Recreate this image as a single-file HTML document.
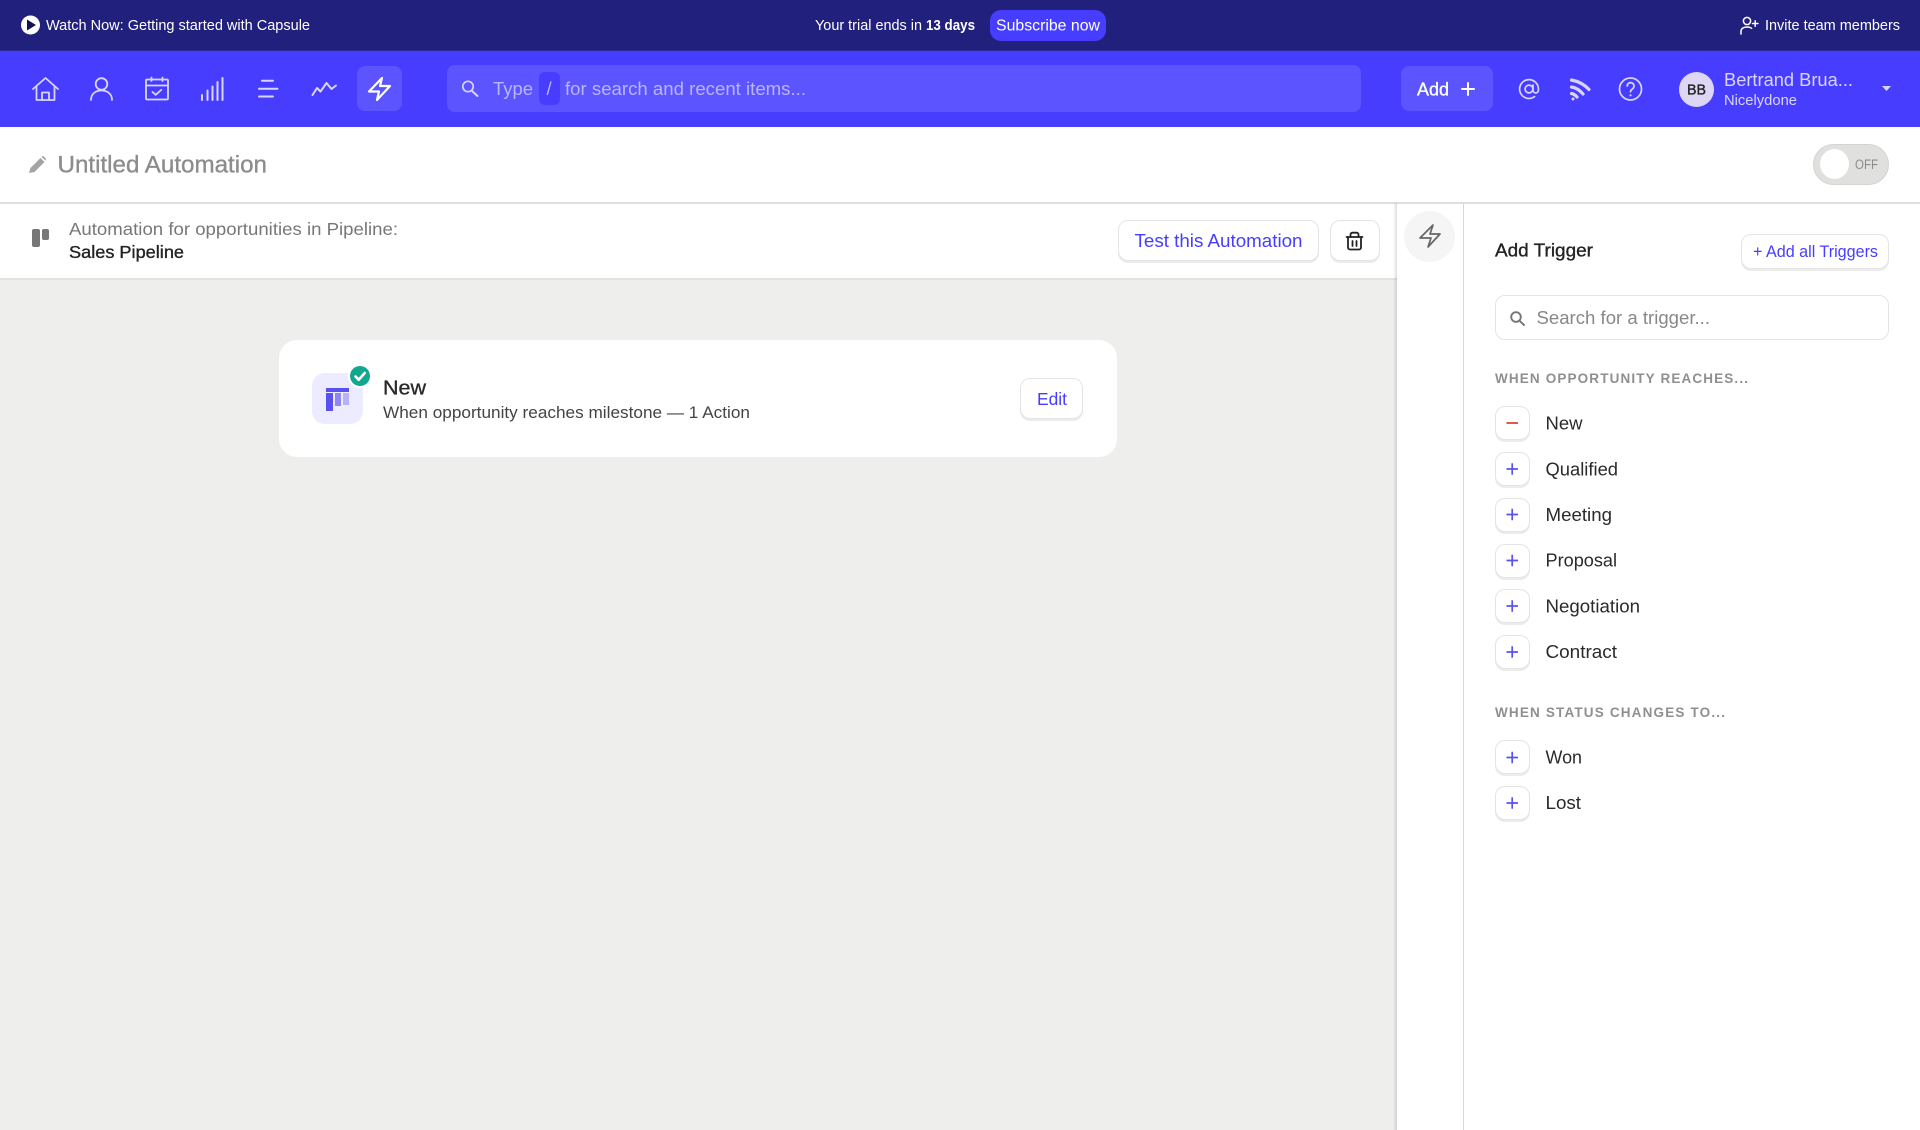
<!DOCTYPE html>
<html lang="en">
<head>
<meta charset="utf-8">
<title>Untitled Automation</title>
<style>
html,body{margin:0;padding:0;width:1920px;height:1130px;overflow:hidden;background:#fff;font-family:"Liberation Sans",sans-serif}
.a{position:absolute;box-sizing:border-box}
svg{position:absolute;left:0;top:0}
text{font-family:"Liberation Sans",sans-serif;white-space:pre}
.m{stroke:currentColor;stroke-width:.35px}
.btn{background:#fff;border:1.5px solid #e4e4e4;border-radius:10px;box-shadow:0 2px 0 #ececec}
</style>
</head>
<body>
<div class="a" style="left:0;top:0;width:1920px;height:51px;background:#21207d;border-bottom:1px solid #2b2a96"></div>
<div class="a" style="left:0;top:51px;width:1920px;height:76px;background:#473dff"></div>
<div class="a" style="left:990px;top:10px;width:116px;height:31px;background:#473dff;border-radius:11px"></div>
<div class="a" style="left:357px;top:66px;width:45px;height:45px;background:#5b54ff;border-radius:8px"></div>
<div class="a" style="left:447px;top:65px;width:914px;height:47px;background:#5b54ff;border-radius:8px"></div>
<div class="a" style="left:539px;top:72px;width:21px;height:33px;background:#473dff;border-radius:6px"></div>
<div class="a" style="left:1401px;top:66px;width:92px;height:45px;background:#5b54ff;border-radius:8px"></div>
<div class="a" style="left:1679px;top:72px;width:35px;height:35px;background:#ded6f5;border-radius:50%"></div>

<div class="a" style="left:0;top:202px;width:1920px;height:1.5px;background:#dfdfdf"></div>
<div class="a" style="left:0;top:278px;width:1396.5px;height:852px;background:#eeeeec"></div>
<div class="a" style="left:0;top:278px;width:1396.5px;height:1.5px;background:#e2e2e0"></div>
<div class="a" style="left:1393px;top:203px;width:3.5px;height:927px;background:linear-gradient(90deg,rgba(0,0,0,0),rgba(0,0,0,.13))"></div>
<div class="a" style="left:1463px;top:203px;width:1px;height:927px;background:#d8d8d8"></div>

<div class="a" style="left:1813px;top:144px;width:76px;height:41px;background:#e0e0de;border:1.5px solid #d4d4d2;border-radius:21px"></div>
<div class="a" style="left:1820px;top:149px;width:29px;height:30px;background:#fff;border-radius:50%"></div>

<div class="a btn" style="left:1118px;top:220px;width:201px;height:41px"></div>
<div class="a btn" style="left:1330px;top:220px;width:50px;height:41px"></div>
<div class="a" style="left:1404px;top:211px;width:51px;height:51px;background:#f5f5f5;border-radius:50%"></div>

<div class="a" style="left:279px;top:340px;width:838px;height:117px;background:#fff;border-radius:18px"></div>
<div class="a" style="left:312px;top:373px;width:51px;height:51px;background:#ecebff;border-radius:13px"></div>
<div class="a" style="left:326px;top:388px;width:23px;height:4px;background:#5a52f0"></div>
<div class="a" style="left:326px;top:393px;width:7px;height:18px;background:#5a52f0"></div>
<div class="a" style="left:335px;top:393px;width:6px;height:13px;background:#8d87f3"></div>
<div class="a" style="left:343px;top:393px;width:6px;height:12px;background:#b7b3f8"></div>
<div class="a" style="left:348px;top:364px;width:24px;height:24px;background:#fff;border-radius:50%"></div>
<div class="a" style="left:350px;top:366px;width:20px;height:20px;background:#12a88f;border-radius:50%"></div>
<div class="a btn" style="left:1020px;top:378px;width:63px;height:41px"></div>

<div class="a btn" style="left:1741px;top:234px;width:148px;height:35px"></div>
<div class="a" style="left:1495px;top:295px;width:394px;height:45px;background:#fff;border:1.5px solid #e4e4e4;border-radius:10px"></div>

<div class="a btn" style="left:1495px;top:406px;width:35px;height:34px"></div>
<div class="a btn" style="left:1495px;top:452px;width:35px;height:34px"></div>
<div class="a btn" style="left:1495px;top:497.5px;width:35px;height:34px"></div>
<div class="a btn" style="left:1495px;top:543.5px;width:35px;height:34px"></div>
<div class="a btn" style="left:1495px;top:589px;width:35px;height:34px"></div>
<div class="a btn" style="left:1495px;top:635px;width:35px;height:34px"></div>
<div class="a btn" style="left:1495px;top:740px;width:35px;height:34px"></div>
<div class="a btn" style="left:1495px;top:786px;width:35px;height:34px"></div>

<svg width="1920" height="1130" viewBox="0 0 1920 1130" xmlns="http://www.w3.org/2000/svg">
  <!-- top bar icons -->
  <circle cx="30.5" cy="25" r="9.5" fill="#fff"/>
  <path d="M27 19.5 L36 25 L27 30.5 Z" fill="#14134f"/>
  <g fill="none" stroke="#fff" stroke-width="1.5" stroke-linecap="round">
    <circle cx="1747" cy="21" r="3.6"/>
    <path d="M1741 34 v-2.5 c0-3 2.5-4.5 6-4.5 c2 0 3.5 .4 4.6 1.3"/>
    <path d="M1752.5 23.5 h5.5 M1755.2 20.8 v5.4"/>
  </g>

  <!-- nav icons -->
  <g fill="none" stroke="#d9d5ff" stroke-width="1.8" stroke-linecap="round" stroke-linejoin="round">
    <path d="M33 89 L45.5 78 L58 89"/>
    <path d="M36.5 86.5 V100 H54.5 V86.5"/>
    <path d="M42 100 V92.5 H49 V100"/>
    <circle cx="101.5" cy="84" r="5.8"/>
    <path d="M91 100 c0-6 4.5-9.5 10.5-9.5 s10.5 3.5 10.5 9.5"/>
    <rect x="146" y="79.5" width="22" height="20" rx="1"/>
    <path d="M146 85.5 H168 M151.5 77.5 V81 M162.5 77.5 V81"/>
    <path d="M152.5 92 l3.2 2.8 5.6-5"/>
    <path d="M202 95 V100 M207.5 90.5 V100 M212.5 86.5 V100 M217.5 82 V100 M222.5 78 V100" stroke-width="2"/>
    <path d="M262 80.7 H273 M259 88.7 H277.5 M259 96.5 H273" stroke-width="2"/>
    <path d="M312.5 95 L317 88 L320.5 91.5 L326.5 83 L331.5 89 L336 85.5" stroke-width="2"/>
    <circle cx="468" cy="86.5" r="5.2" stroke-width="1.7"/>
    <path d="M472 91 L477.5 96" stroke-width="2"/>
  </g>
  <path d="M382 78 L369 91.5 H379 L377 100 L390 86 H380 Z" fill="none" stroke="#fff" stroke-width="2.2" stroke-linejoin="round"/>
  <path d="M1462 89 H1474 M1468 83 V95" stroke="#fff" stroke-width="2" fill="none" stroke-linecap="round"/>
  <g fill="none" stroke="#d9d5ff" stroke-width="1.7" stroke-linecap="round">
    <circle cx="1529" cy="89" r="3.9"/>
    <path d="M1533 85 v5.2 a2.7 2.7 0 0 0 5.4 0 v-1.2 a9.4 9.4 0 1 0 -3.8 7.6"/>
    <circle cx="1630.5" cy="89" r="11"/>
    <path d="M1627.2 86 a3.4 3.4 0 1 1 5.4 2.8 c-1.3 .9-2.1 1.5-2.1 3"/>
  </g>
  <circle cx="1630.5" cy="95.3" r="1.1" fill="#d9d5ff"/>
  <g fill="none" stroke="#d9d5ff" stroke-width="3.2" stroke-linecap="round">
    <path d="M1571.5 80 Q1582 82 1589 89.5"/>
    <path d="M1571.5 87 Q1578 88 1583 94"/>
    <path d="M1571.5 93.5 Q1574.5 94 1577 97"/>
  </g>
  <circle cx="1573" cy="99" r="1.5" fill="#d9d5ff"/>
  <path d="M1882 86 H1891 L1886.5 91 Z" fill="#d9d5ff"/>

  <!-- header icons -->
  <path d="M29 173 L30.5 168 L40.5 158 L44.5 162 L34.5 172 Z M41.5 157 L43 155.8 L46 158.8 L45.5 160.5 Z" fill="#a3a3a3"/>
  <rect x="32" y="229" width="8" height="18" rx="2" fill="#777"/>
  <rect x="42" y="229" width="7" height="11" rx="2" fill="#777"/>

  <!-- trash -->
  <g fill="none" stroke="#222" stroke-width="1.8" stroke-linecap="round" stroke-linejoin="round">
    <path d="M1346.5 237 H1362.5"/>
    <path d="M1350.5 237 V234.5 a1.8 1.8 0 0 1 1.8 -1.8 h4.4 a1.8 1.8 0 0 1 1.8 1.8 V237"/>
    <path d="M1348 237 V247.5 a2 2 0 0 0 2 2 h9 a2 2 0 0 0 2 -2 V237"/>
    <path d="M1352.5 241 V246 M1356.5 241 V246"/>
  </g>
  <path d="M1433 225 L1420 238 H1431 L1428 247 L1440 234 H1430 Z" fill="none" stroke="#666" stroke-width="1.7" stroke-linejoin="round"/>

  <!-- badge check -->
  <path d="M355.5 376.5 L358.7 379.7 L364.7 373" fill="none" stroke="#fff" stroke-width="2.6" stroke-linecap="round" stroke-linejoin="round"/>

  <!-- trigger search icon -->
  <g fill="none" stroke="#777" stroke-width="1.9" stroke-linecap="round">
    <circle cx="1516" cy="317" r="4.8"/>
    <path d="M1519.8 321 L1524 325"/>
  </g>

  <!-- item icons -->
  <path d="M1506.5 423 H1518" stroke="#e8403a" stroke-width="1.8" fill="none"/>
  <g stroke="#5a52f0" stroke-width="1.7" fill="none">
    <path d="M1506.5 469 H1518 M1512.2 463.3 V474.7"/>
    <path d="M1506.5 514.5 H1518 M1512.2 508.8 V520.2"/>
    <path d="M1506.5 560.5 H1518 M1512.2 554.8 V566.2"/>
    <path d="M1506.5 606 H1518 M1512.2 600.3 V611.7"/>
    <path d="M1506.5 652 H1518 M1512.2 646.3 V657.7"/>
    <path d="M1506.5 757.5 H1518 M1512.2 751.8 V763.2"/>
    <path d="M1506.5 803 H1518 M1512.2 797.3 V808.7"/>
  </g>

  <!-- text -->
  <g fill="#fff" color="#fff" font-size="14.4">
    <text x="46" y="30" textLength="264" lengthAdjust="spacingAndGlyphs">Watch Now: Getting started with Capsule</text>
    <text x="815" y="30" textLength="107" lengthAdjust="spacingAndGlyphs">Your trial ends in</text>
    <text x="926" y="30" font-weight="700" textLength="49" lengthAdjust="spacingAndGlyphs">13 days</text>
    <text x="996" y="30.5" font-size="15.5" textLength="104" lengthAdjust="spacingAndGlyphs">Subscribe now</text>
    <text x="1765" y="30" textLength="135" lengthAdjust="spacingAndGlyphs">Invite team members</text>
  </g>
  <g fill="#b9b5ff" font-size="18.6">
    <text x="493" y="95" textLength="40" lengthAdjust="spacingAndGlyphs">Type</text>
    <text x="546.5" y="95">/</text>
    <text x="565" y="95" textLength="241" lengthAdjust="spacingAndGlyphs">for search and recent items...</text>
  </g>
  <text class="m" x="1417" y="95.5" font-size="18.6" fill="#fff" color="#fff" textLength="32" lengthAdjust="spacingAndGlyphs">Add</text>
  <text x="1724" y="86" font-size="18.6" fill="#d9d5ff" textLength="129" lengthAdjust="spacingAndGlyphs">Bertrand Brua...</text>
  <text x="1724" y="105" font-size="14.4" fill="#d9d5ff" textLength="73" lengthAdjust="spacingAndGlyphs">Nicelydone</text>
  <text class="m" x="1687" y="94.5" font-size="14.4" fill="#222" color="#222" textLength="19" lengthAdjust="spacingAndGlyphs">BB</text>

  <text class="m" x="57.5" y="172.5" font-size="23.6" fill="#8c8c8c" color="#8c8c8c" textLength="209.5" lengthAdjust="spacingAndGlyphs">Untitled Automation</text>
  <text x="69" y="235" font-size="17.5" fill="#777" textLength="329" lengthAdjust="spacingAndGlyphs">Automation for opportunities in Pipeline:</text>
  <text class="m" x="69" y="258" font-size="17.5" fill="#222" color="#222" textLength="115" lengthAdjust="spacingAndGlyphs">Sales Pipeline</text>
  <text x="1134.5" y="247" font-size="18.6" fill="#473dff" textLength="168" lengthAdjust="spacingAndGlyphs">Test this Automation</text>
  <text x="1855" y="169" font-size="13.4" fill="#8c8c8c" textLength="23" lengthAdjust="spacingAndGlyphs">OFF</text>

  <text class="m" x="383" y="394.5" font-size="20.6" fill="#2a2a2a" color="#2a2a2a" textLength="43" lengthAdjust="spacingAndGlyphs">New</text>
  <text x="383" y="418" font-size="17" fill="#444" textLength="367" lengthAdjust="spacingAndGlyphs">When opportunity reaches milestone — 1 Action</text>
  <text x="1037" y="405" font-size="17.5" fill="#473dff" textLength="30" lengthAdjust="spacingAndGlyphs">Edit</text>

  <text class="m" x="1495" y="256.5" font-size="18.6" fill="#222" color="#222" textLength="98" lengthAdjust="spacingAndGlyphs">Add Trigger</text>
  <text x="1753" y="257" font-size="16.5" fill="#473dff" textLength="125" lengthAdjust="spacingAndGlyphs">+ Add all Triggers</text>
  <text x="1536.5" y="324" font-size="18.6" fill="#888" textLength="173.5" lengthAdjust="spacingAndGlyphs">Search for a trigger...</text>
  <text x="1495" y="383" font-size="13.5" font-weight="700" fill="#8f8f8f" textLength="253" lengthAdjust="spacing">WHEN OPPORTUNITY REACHES...</text>
  <text x="1495" y="717" font-size="13.5" font-weight="700" fill="#8f8f8f" textLength="230" lengthAdjust="spacing">WHEN STATUS CHANGES TO...</text>

  <g font-size="18.6" fill="#2a2a2a">
    <text x="1545.5" y="429.5" textLength="37" lengthAdjust="spacingAndGlyphs">New</text>
    <text x="1545.5" y="475.5" textLength="72.5" lengthAdjust="spacingAndGlyphs">Qualified</text>
    <text x="1545.5" y="521" textLength="66.5" lengthAdjust="spacingAndGlyphs">Meeting</text>
    <text x="1545.5" y="566.5" textLength="71.5" lengthAdjust="spacingAndGlyphs">Proposal</text>
    <text x="1545.5" y="612.5" textLength="94.5" lengthAdjust="spacingAndGlyphs">Negotiation</text>
    <text x="1545.5" y="658" textLength="71.5" lengthAdjust="spacingAndGlyphs">Contract</text>
    <text x="1545.5" y="763.5" textLength="36.5" lengthAdjust="spacingAndGlyphs">Won</text>
    <text x="1545.5" y="809" textLength="35.5" lengthAdjust="spacingAndGlyphs">Lost</text>
  </g>
</svg>
</body>
</html>
